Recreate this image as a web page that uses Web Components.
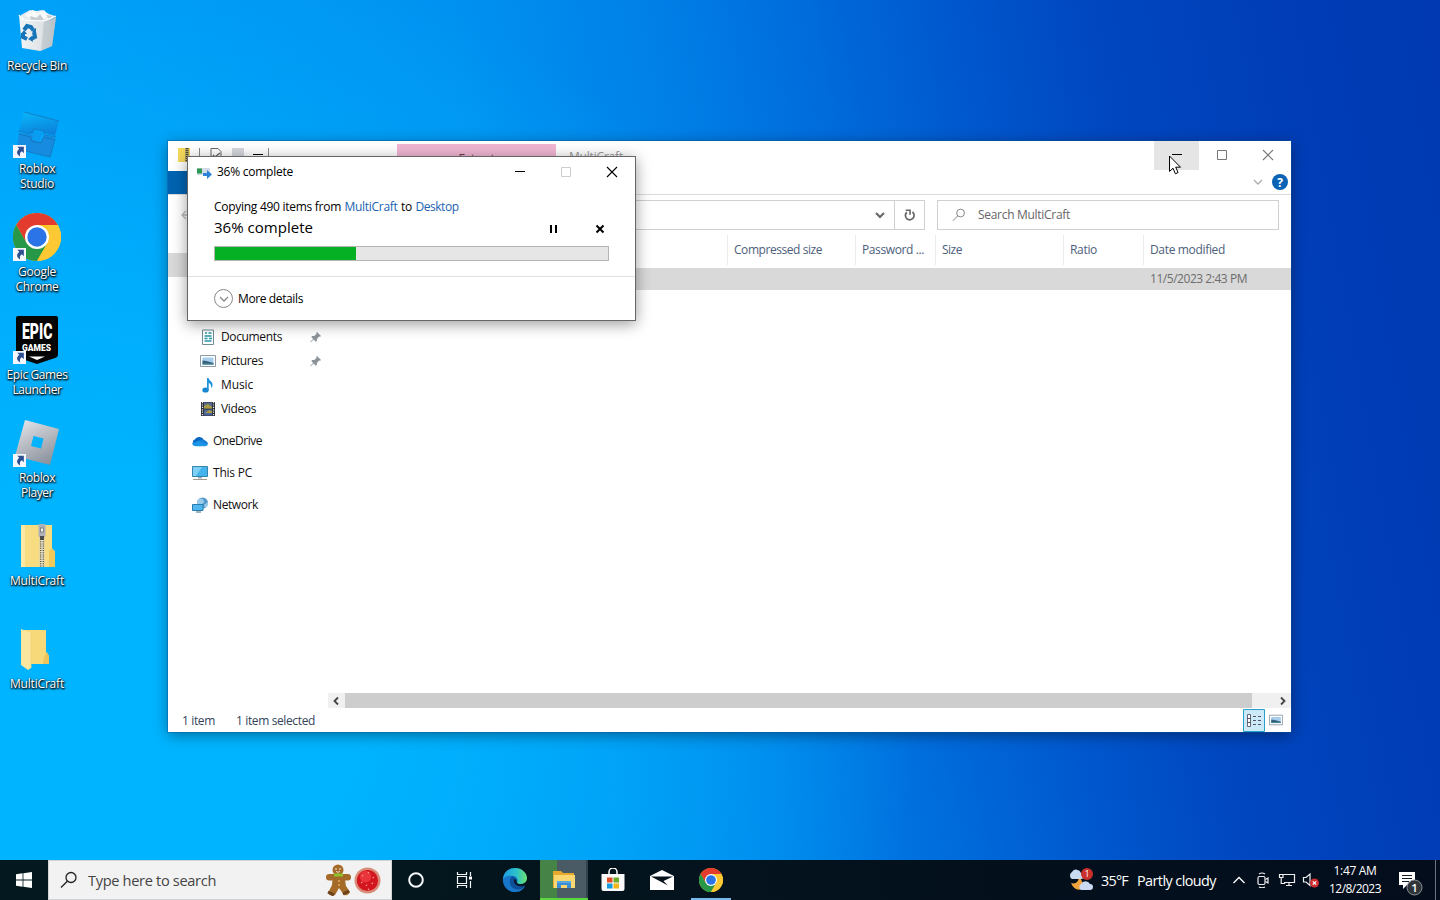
<!DOCTYPE html>
<html lang="en">
<head>
<meta charset="utf-8">
<title>Desktop</title>
<style>
    html, body {
        margin: 0;
        height: 100%;
        overflow: hidden;
    }
    body {
        font-family: "Open Sans", "Noto Sans", sans-serif;
        font-size: 12px;
        color: #111;
    }
</style>
</head>
<body>
<desktop-screen></desktop-screen>

<script>
const ICONS = {
    bin: `<svg viewBox="0 0 48 48">
        <defs><linearGradient id="g" x2="1"><stop stop-color="#f3f5f6"/><stop offset=".62" stop-color="#dfe3e5"/><stop offset="1" stop-color="#aeb8bf"/></linearGradient></defs>
        <path d="M8 8 17 3l7 1 5-1 7 4 6 2-6 5H9z" fill="#e9ecee"/>
        <path d="M12 8l8-5 6 5-6 5zM25 6l6-3 5 6-7 4z" fill="#fafafa"/><path d="M17 9l7 2 3-4 4 6-13 1zM33 8l6 1-2 4z" fill="#c6ccd0"/>
        <path d="M6 8l3 33 18 3 12-5 4-29-6 4-26-1z" fill="url(#g)"/>
        <path d="M31 14l12-4-4 29-11 5z" fill="#bcc6cc" opacity=".7"/>
        <path d="M6 8l5 5 20 1 12-5" fill="none" stroke="#fff" stroke-width="1.200"/>
        <g transform="translate(-2)"><g fill="none" stroke="#1874b8" stroke-width="4"><path d="M13 23l3-4 4 1 2 3"/><path d="M23 25l1 5-4 2"/><path d="M16 32l-4-2 0-4"/></g>
        <path d="M20 24l5-3v5zM21 29l-4 3 5 3zM10 27l3-4 3 4z" fill="#1874b8"/></g></svg>`,
    studio: `<svg viewBox="1 0 48 48">
        <defs><linearGradient id="g" x2=".3" y2="1"><stop stop-color="#08b8fb"/><stop offset="1" stop-color="#0b83dc"/></linearGradient></defs>
        <path d="M12 2l35 9-4 15-11-3-1-2-8-2-2 5-14-3z" fill="url(#g)"/>
        <path d="M7 23l12 2 3 1-1 4 8 2 3-7 11 3-5 19-33-8z" fill="#168be0"/>
        <path d="M12 2l35 9M6 21l12 3 4-5 9 2 2 4 11 2M7 24l12 3v4l10 2 3-6 11 3M5 39l33 8 5-18" fill="none" stroke="#1673b9" stroke-width=".8"/>
        <path d="M22 21l8 2-2 8-8-2z" fill="#0a9cf0"/></svg>`,
    chrome: `<svg viewBox="0 0 48 48">
        <circle cx="24" cy="24" r="24" fill="#fcc419"/>
        <path d="M24 24V12h20.8A24 24 0 0 0 3.200 12l10.400 18z" fill="#e33b2e"/>
        <path d="M3.200 12A24 24 0 0 0 24 48l10.400-18L24 24 13.600 30z" fill="#279847"/>
        <path d="M44.800 12A24 24 0 0 1 24 48l10.400-18A12 12 0 0 0 34 17V12z" fill="#fcc934"/>
        <circle cx="24" cy="24" r="12" fill="#fff"/><circle cx="24" cy="24" r="9.700" fill="#2b74e8"/></svg>`,
    epic: `<svg viewBox="1 0 48 48">
        <path d="M6 0h38q2 0 2 2v36q0 3-3 4L25 48 7 42q-3-1-3-4V2q0-2 2-2z" fill="#050505"/>
        <text transform="translate(10 22.500) scale(.64 1)" font-family="Roboto, sans-serif" font-size="22" font-weight="900" fill="#fff">EPIC</text>
        <text x="10" y="35" textLength="29" lengthAdjust="spacingAndGlyphs" font-family="Roboto, sans-serif" font-size="8.500" font-weight="900" fill="#fff">GAMES</text>
        <path d="M17 40.500h16L25 44z" fill="#fff"/></svg>`,
    player: `<svg viewBox="1 0 48 48">
        <defs><linearGradient id="g" x1=".2" x2=".7" y2="1"><stop stop-color="#e1e3e7"/><stop offset=".5" stop-color="#b5b9c0"/><stop offset="1" stop-color="#8a919c"/></linearGradient></defs>
        <path fill-rule="evenodd" d="M13 1l34 9-9 36-35-9zM21.500 17l-2.500 10 10 2.500 2.500-10z" fill="url(#g)"/></svg>`,
    zipBig: `<svg viewBox="0 0 48 48">
        <path d="M8 3h31v24l3 2v16H8z" fill="#f7dc82"/><path d="M8 3h4v42H8z" fill="#fbe8a5"/><path d="M36 29l3-3 3 4v15h-6z" fill="#efc95b"/>
        <path d="M26 2h6v43h-6z" fill="#e5d7a3"/>
        <path d="M29 17v28" stroke="#5c5746" stroke-width="4" stroke-dasharray="1 1.200"/><path d="M29 17v28" stroke="#eee" stroke-width="1"/>
        <rect x="25.500" y="2" width="7" height="13" rx="1" fill="#aeb2b8"/><rect x="27.500" y="6" width="3" height="4" fill="#eee" stroke="#666" stroke-width=".7"/><path d="M27 14h4v4h-4z" fill="#4b4b4b"/></svg>`,
    folderBig: `<svg viewBox="0 0 48 48">
        <path d="M9 5h24v22l3 4v8H9z" fill="#f8d979"/><path d="M8 4l10 4v35l-3 2-7-5z" fill="#fbe6a0"/><path d="M31 32l3-5 2 4v8h-6z" fill="#edc45c"/><path d="M18 8v35" stroke="#eed07a" stroke-width=".8"/></svg>`,
    shortcut: `<svg viewBox="0 0 12 12"><path d="M0 0h12v12H0z" fill="#f4f7fb"/><path d="M4 1.500h6v6L8.200 5.700C6 7 6.300 8.500 6.600 10.500 3 8.500 3 6 5.800 3.500z" fill="#2c4e92"/></svg>`,
    zip: `<svg viewBox="0 0 16 16"><path d="M2 1h12v14H2z" fill="#f4d85b"/><path d="M9 1h4v14H9z" fill="#b7a865"/><path d="M11 1v14" stroke="#4d4630" stroke-width="2.500" stroke-dasharray="1 1"/></svg>`,
    page: `<svg viewBox="0 0 16 16"><path d="M3 1.500h7l3 3V15H3z" fill="#fff" stroke="#666"/><path d="M5 8l2 2 5-4" fill="none" stroke="#666" stroke-width="1.400"/></svg>`,
    copy: `<svg viewBox="0 0 16 16"><path d="M1 4h13v7H1z" fill="#d3dce6"/><path d="M1 4.500h5v5H1z" fill="#2c9a55"/><path d="M7 9h4V6l5 4.500L11 15v-3H7z" fill="#2d83d8"/></svg>`,
    minus: `<svg viewBox="0 0 12 12"><path d="M1 5.500h10" stroke="currentColor"/></svg>`,
    square: `<svg viewBox="0 0 12 12"><path d="M1.500 1.500h9v9h-9z" fill="none" stroke="currentColor"/></svg>`,
    cross: `<svg viewBox="0 0 12 12"><path d="M1 1l10 10M11 1 1 11" stroke="currentColor" stroke-width="1.100"/></svg>`,
    crossBold: `<svg viewBox="0 0 12 12"><path d="M2.500 2.500l7 7M9.500 2.500l-7 7" stroke="currentColor" stroke-width="2"/></svg>`,
    pause: `<svg viewBox="0 0 12 12"><path d="M3 2v8M8 2v8" stroke="currentColor" stroke-width="2"/></svg>`,
    down: `<svg viewBox="0 0 12 12"><path d="M2 4l4 4 4-4" fill="none" stroke="currentColor" stroke-width="var(--stroke, 1.300)"/></svg>`,
    left: `<svg viewBox="0 0 12 12"><path d="M8 2.500 4.500 6 8 9.500" fill="none" stroke="#444" stroke-width="1.800"/></svg>`,
    right: `<svg viewBox="0 0 12 12"><path d="M4 2.500 7.500 6 4 9.500" fill="none" stroke="#444" stroke-width="1.800"/></svg>`,
    up: `<svg viewBox="0 0 14 14"><path d="M1.500 10 7 4.500l5.500 5.500" fill="none" stroke="#fff" stroke-width="1.300"/></svg>`,
    back: `<svg viewBox="0 0 12 12"><path d="M11 6H2M6 2 2 6l4 4" fill="none" stroke="#bbb" stroke-width="1.300"/></svg>`,
    refresh: `<svg viewBox="0 0 12 12"><path d="M8.700 2.800a4 4 0 1 1-5.200.2" fill="none" stroke="#666" stroke-width="1.600"/><path d="M2.500 1.200h4v4" fill="none" stroke="#666" stroke-width="1.500"/></svg>`,
    search: `<svg viewBox="0 0 18 18"><circle cx="11" cy="6.500" r="5" fill="none" stroke="currentColor" stroke-width="var(--stroke, 1.300)"/><path d="M7.300 10.200 1 16.500" stroke="currentColor" stroke-width="var(--stroke, 1.300)"/></svg>`,
    help: `<svg viewBox="0 0 16 16"><circle cx="8" cy="8" r="8" fill="#0a63b5"/><text x="8" y="12.500" text-anchor="middle" font-family="Open Sans, sans-serif" font-weight="700" font-size="12" fill="#fff">?</text></svg>`,
    document: `<svg viewBox="0 0 16 16"><path d="M2.500 1h11v14.500h-11z" fill="#fff" stroke="#6f8a94"/><path d="M5 4h2M8.500 4h3M4.500 7h7M4.500 9.500h3M9 9.500h3M4.500 12h7" stroke="#2596a6" stroke-width="1.300"/></svg>`,
    picture: `<svg viewBox="0 0 16 16"><path d="M.5 2.500h15v11H.5z" fill="#fff" stroke="#8b9aa5"/><path d="M2.500 4.500h11v7h-11z" fill="#a6cdeb"/><path d="M2.500 7.500l4 .5 7 2v1.500h-11z" fill="#34617b"/><path d="M2.500 10.500h11v1h-11z" fill="#4c8d9c"/></svg>`,
    music: `<svg viewBox="0 0 16 16"><ellipse cx="5.500" cy="13" rx="3.200" ry="2.600" fill="#1686cf"/><path d="M7 13V1h1.600c.4 3 4.200 3.500 4 7-.1 1.500-1 2.500-1.600 3 .6-3-.8-4.500-2.300-5v7z" fill="#1e93dc"/></svg>`,
    video: `<svg viewBox="0 0 16 16"><path d="M1 1h14v14H1z" fill="#2c3038"/><path d="M4 1.500h8v6H4z" fill="#576a8d"/><path d="M4 8.500h8v6H4z" fill="#4c659a"/><path d="M4 5l4-2 4 3v1.500H4zM5 12l4-3 3 1v2z" fill="#a89b42"/><path d="M2.500 1v14M13.500 1v14" stroke="#e5e5e5" stroke-width="1.200" stroke-dasharray="1.200 1.200"/></svg>`,
    onedrive: `<svg viewBox="0 0 16 16"><path d="M3.500 13A3.500 3.500 0 0 1 3 6.300a5 5 0 0 1 9 1A3 3 0 0 1 13 13z" fill="#0a67c2"/><path d="M0 10.500 7 7.500l9 4q-1 1.800-3 1.800H4q-3 0-4-2.800z" fill="#1b95e8"/><path d="M7 7.500q3-2 6 0 3 1 3 4z" fill="#1580d5"/></svg>`,
    pc: `<svg viewBox="0 0 16 16"><path d="M.5 1.500h15v10H.5z" fill="#45b3ec" stroke="#3584ad"/><path d="M1 2h9l-6 9H1z" fill="#80d0f5"/><path d="M6 12h4v1.500H6z" fill="#9ab"/><path d="M1 14.500h14" stroke="#a39b8d"/></svg>`,
    network: `<svg viewBox="0 0 16 16"><circle cx="10.500" cy="6" r="5.500" fill="#5599c6"/><path d="M8 1.500q4 0 4 4l-4 3-3-2q0-4 3-5zM12 8l4-3v3l-3 3z" fill="#9acced"/><path d="M.5 7.500h10.500v6H.5z" fill="#4fb7ee" stroke="#287db0"/><path d="M4 15h5" stroke="#829cab" stroke-width="1.500"/></svg>`,
    pin: `<svg viewBox="0 0 12 12"><path d="M7 1l4 4-1 .8-.8-.2L7 7.900 6.800 10l-.9.700L3.600 8.400.8 11.200l-.5-.5L3.100 8 1.300 6.100l.8-1 2.200-.2L6.500 2.800l-.2-1z" fill="#8d9499"/></svg>`,
    details: `<svg viewBox="0 0 22 23"><path d="M.5.500h21v22H.5z" fill="#cce9f7" stroke="#29a0c9"/><path d="M4.500 5.500h3v12h-3z" fill="#fff" stroke="#667"/><path d="M4 9.500h4M4 13.500h4M10 7.500h3M15 7.500h3M10 11.500h3M15 11.500h3M10 15.500h3M15 15.500h3" stroke="#556"/></svg>`,
    logo: `<svg viewBox="0 0 16 16"><path d="M0 2.200 6.600 1.300v6.300H0zM7.400 1.200 16 0v7.600H7.400zM0 8.400h6.600v6.300L0 13.800zM7.400 8.400H16V16l-8.600-1.200z" fill="#fff"/></svg>`,
    ginger: `<svg viewBox="0 0 26 32"><g fill="#a66a28"><circle cx="13" cy="6" r="5.500"/><rect x="1" y="10" width="25" height="6.500" rx="3.200"/><path d="M8 10h11l2 12 4 6q-2 4-6 3l-5-7-4 7q-5 2-7-2l4-8z"/></g><path d="M3 28l6 3M18 30l6-3" stroke="#6c421d" stroke-width="3"/><path d="M9 11h9" stroke="#8bc32b" stroke-width="3"/><circle cx="11" cy="5" r=".8" fill="#fff"/><circle cx="15" cy="5" r=".8" fill="#fff"/><path d="M11 7.500q2 1.500 4 0" stroke="#fff" stroke-width=".8" fill="none"/><circle cx="14" cy="17" r="1" fill="#e1ae5a"/><circle cx="14" cy="21" r="1" fill="#e1ae5a"/></svg>`,
    cookie: `<svg viewBox="0 0 28 28"><circle cx="14" cy="14" r="13.500" fill="#d98c78"/><circle cx="14" cy="14" r="11" fill="#d2151f"/><circle cx="12" cy="10" r="6" fill="#e8343a"/><g fill="#ff9f98"><circle cx="9" cy="9" r=".8"/><circle cx="15" cy="6" r=".8"/><circle cx="20" cy="11" r=".8"/><circle cx="8" cy="16" r=".8"/><circle cx="13" cy="19" r=".8"/><circle cx="19" cy="17" r=".8"/><circle cx="15" cy="23" r=".8"/></g></svg>`,
    cortana: `<svg viewBox="0 0 18 18"><circle cx="9" cy="9" r="6.800" fill="none" stroke="#f3f7f8" stroke-width="2"/></svg>`,
    taskview: `<svg viewBox="0 0 18 18"><path d="M2.500 1v2.500h9V1M2.500 17v-2.500h9V17M2.500 5.500h9v7h-9zM15.500 1v4M15.500 10v7" fill="none" stroke="#f3f7f8" stroke-width="1.200"/><path d="M14 5.500h3v3h-3z" fill="#fff"/></svg>`,
    edge: `<svg viewBox="0 0 24 24">
        <defs><linearGradient id="a" x2="1"><stop stop-color="#1d9de2"/><stop offset=".55" stop-color="#2cc1cc"/><stop offset="1" stop-color="#6be26c"/></linearGradient></defs>
        <circle cx="12" cy="12" r="12" fill="#0d69b8"/>
        <path d="M14 23.800 24 19V10l-8 6z" fill="#04131d"/>
        <path d="M0 12C0 4 6 0 12 0c7 0 12 5 12 10 0 4-3 6-7 6-2 0-3.500-.8-3-1.600 2-3-1-6.400-5-6.400-5 0-8 2-9 4z" fill="url(#a)"/>
        <path d="M0 12c1-3 5-5 9-4-3 3-3 9 1 12 4 2.500 9 1 12.500-2.500C20 22 16 24 12 24 5 24 0 18 0 12z" fill="#1877c9"/>
        <path d="M9 8c-3 3-3 9 1 12 4 2.500 9 1 12.500-2.500-4 1.500-9 .5-10.500-3C11 12 13 10 9 8z" fill="#0d4f99"/>
        <path d="M11.500 10.500c-1.500 3 0 6.500 4 7.500 3 .5 5-.3 6.500-1.500-3 .5-6 0-7.800-1.500-1.200-1.200.5-2.500-2.700-4.500z" fill="#071a2c"/></svg>`,
    explorer: `<svg viewBox="0 0 22 20"><path d="M0 1h8l2 2h11v15H0z" fill="#e8a92c"/><path d="M1 5h21v13H1z" fill="#fbd671"/><path d="M4 18v-7h14v7h-4v-3H8v3z" fill="#3b8fd2"/><path d="M4 11h14v2H4z" fill="#57a7e1"/></svg>`,
    store: `<svg viewBox="0 0 24 24"><path d="M8 6V4a4 4 0 0 1 8 0v2" fill="none" stroke="#fff" stroke-width="1.500"/><path d="M.5 6h23v15q0 2-2 2h-19q-2 0-2-2z" fill="#fafafa"/><path d="M6 9.500h5.500v5H6z" fill="#e64b28"/><path d="M12.500 9.500H18v5h-5.500z" fill="#6aac28"/><path d="M6 15.500h5.500v5H6z" fill="#139bdc"/><path d="M12.500 15.500H18v5h-5.500z" fill="#f3b515"/></svg>`,
    mail: `<svg viewBox="0 0 24 20"><path d="M0 6 12 0l12 6v14H0z" fill="#fff"/><path d="M1 6.500h22L13.500 11l4.500 4.500z" fill="#07121a"/></svg>`,
    weather: `<svg viewBox="0 0 26 24"><path d="M3 15q7 2 8-6 5 4 3 12-7 3-11-6z" fill="#f1a23a"/><path d="M4 11a4 4 0 0 1 0-7 5 5 0 0 1 9 1 3 3 0 0 1 0 6z" fill="#c9daf3"/><path d="M13 22a3.500 3.500 0 0 1 0-6 5 5 0 0 1 9 0 3 3 0 0 1 0 6z" fill="#cbdaf3"/><circle cx="19" cy="6" r="6" fill="#c9302c"/><text x="19" y="9.300" text-anchor="middle" font-family="Open Sans, sans-serif" font-size="9" fill="#fff">1</text></svg>`,
    meet: `<svg viewBox="0 0 14 16"><rect x="2" y="4.500" width="7" height="8" rx="1.500" fill="none" stroke="#eee" stroke-width="1.200"/><path d="M9.500 7.500 12 6v5l-2.500-1.500M3 2Q6 0 9 2M3 15q3 1.500 6 0" fill="none" stroke="#eee" stroke-width="1.200"/></svg>`,
    lan: `<svg viewBox="0 0 18 16"><path d="M5 2.500h11.500v8H6M8 13.500h6M11 10.500v3" fill="none" stroke="#eee" stroke-width="1.200"/><path d="M1.500 2.500H5v3H1.500zM3.200 5.500v6h4" fill="none" stroke="#eee" stroke-width="1.200"/></svg>`,
    volume: `<svg viewBox="0 0 18 16"><path d="M1.500 5.500H4L8 2v11.500L4 10H1.500z" fill="none" stroke="#eee" stroke-width="1.200"/><circle cx="12.500" cy="11" r="4.500" fill="#cf2c30"/><path d="M10.800 9.300l3.400 3.400M14.200 9.300l-3.400 3.400" stroke="#fff" stroke-width="1.200"/></svg>`,
    notes: `<svg viewBox="0 0 26 26"><path d="M1 2h16v13H9l-4 4v-4H1z" fill="#fff"/><path d="M4 5.500h10M4 8.500h10M4 11.500h7" stroke="#111b23"/><circle cx="16.500" cy="17.500" r="7.500" fill="#30353a" stroke="#8d9194"/><text x="16.500" y="21.500" text-anchor="middle" font-family="Open Sans, sans-serif" font-size="11.500" font-weight="600" fill="#fff">1</text></svg>`,
    cursor: `<svg viewBox="0 0 14 20"><path d="M1.500 1v15.500l3.500-3.300 2.400 5.600 2.700-1.200-2.400-5.400h4.800z" fill="#fff" stroke="#000"/></svg>`
}

class WinIcon extends HTMLElement {

    constructor() {
        super()
        this.shadow = this.attachShadow({ mode: 'open' })
    }

    connectedCallback() {
        const w = this.getAttribute('w') || 16
        const h = this.getAttribute('h') || w
        this.shadow.innerHTML =
      /*html*/`
        <style>
            :host{
                display:block;
                flex:none;
                width:${w}px;
                height:${h}px;
            }
            svg{
                display:block;
                width:100%;
                height:100%;
            }
        </style>
        ${ICONS[this.getAttribute('name')]}
      `
    }
}

// one line of text, tracked so that it fills the width in "w"
class FitText extends HTMLElement {

    constructor() {
        super()
        this.shadow = this.attachShadow({ mode: 'open' })
    }

    connectedCallback() {
        const w = Number(this.getAttribute('w'))
        this.shadow.innerHTML =
      /*html*/`
        <style>
            :host{
                display:inline-block;
                flex:none;
                width:${w}px;
                white-space:nowrap;
            }
        </style>
        <span><slot></slot></span>
      `
        const span = this.shadow.querySelector('span')
        const natural = span.getBoundingClientRect().width
        const gap = (w - natural) / this.textContent.length
        span.style.letterSpacing = gap.toFixed(3) + 'px'
    }
}

class DesktopIcon extends HTMLElement {

    constructor() {
        super()
        this.shadow = this.attachShadow({ mode: 'open' })
    }

    connectedCallback() {
        this.shadow.innerHTML =
      /*html*/`
        <style>
            :host{
                display:flex;
                flex-direction:column;
                align-items:center;
                box-sizing:border-box;
                width:74px;
                height:103px;
                padding-top:7px;
                color:#fff;
                line-height:15px;
                text-align:left;
                text-shadow:0 1px 2px #000, 1px 1px 2px #000, 0 0 2px #0006;
            }
            .picture{
                position:relative;
                margin-bottom:3px;
            }
            .arrow{
                position:absolute;
                left:0;
                bottom:0;
            }
        </style>
        <div class="picture">
            <win-icon name="${this.getAttribute('icon')}" w="48"></win-icon>
            ${this.hasAttribute('shortcut') ? '<win-icon class="arrow" name="shortcut" w="13"></win-icon>' : ''}
        </div>
        <slot></slot>
      `
    }
}

class NavItem extends HTMLElement {

    constructor() {
        super()
        this.shadow = this.attachShadow({ mode: 'open' })
    }

    connectedCallback() {
        this.shadow.innerHTML =
      /*html*/`
        <style>
            :host{
                display:flex;
                align-items:center;
                gap:5px;
                height:24px;
                padding:0 6px 0 24px;
            }
            :host([child]){
                padding-left:32px;
            }
            win-icon{
                margin-top:1px;
            }
            .pin{
                margin-left:auto;
            }
        </style>
        <win-icon name="${this.getAttribute('icon')}"></win-icon>
        <slot></slot>
        ${this.hasAttribute('pinned') ? '<win-icon class="pin" name="pin" w="12"></win-icon>' : ''}
      `
    }
}

class ExplorerWindow extends HTMLElement {

    constructor() {
        super()
        this.shadow = this.attachShadow({ mode: 'open' })
        this.render()
    }

    render() {
        this.shadow.innerHTML =
      /*html*/`
        <style>
            :host{
                display:flex;
                flex-direction:column;
                width:1123px;
                height:591px;
                background:#fff;
                box-shadow:0 0 0 1px #0a559b66, 0 3px 14px #0006;
            }
            .title{
                display:flex;
                height:30px;
                color:#999;
            }
            .tools{
                display:flex;
                align-items:center;
                gap:8px;
                width:221px;
                height:28px;
                padding-left:8px;
            }
            .tools i{
                width:1px;
                height:14px;
                margin-left:-1px;
                background:#888;
            }
            .tools i:last-child{
                margin-left:-4px;
            }
            .tools b{
                width:12px;
                height:15px;
                background:#d4d7dc;
            }
            .tools win-icon[name=minus]{
                color:#000;
            }
            .extract{
                width:159px;
                margin-top:3px;
                background:#f1b6d2;
                color:#5b3a4b;
                text-align:center;
                line-height:29px;
                overflow:hidden;
            }
            .name{
                padding-left:13px;
                line-height:31px;
            }
            .buttons{
                display:flex;
                margin-left:auto;
                color:#777;
            }
            .buttons div{
                display:flex;
                align-items:center;
                justify-content:center;
                box-sizing:border-box;
                width:46px;
                height:29px;
                padding-bottom:1px;
            }
            .buttons .hover{
                width:45px;
                background:#e5e5e5;
                color:#000;
            }
            .tabs{
                display:flex;
                height:23px;
                border-bottom:1px solid #dadbdc;
                padding-right:3px;
                color:#aaa;
            }
            .file{
                width:56px;
                margin-right:auto;
                background:#0063b1;
            }
            .tabs win-icon{
                margin:5px 8px 0 0;
            }
            .tabs win-icon:last-child{
                margin:3px 0 0;
            }
            .address{
                display:flex;
                align-items:center;
                height:40px;
                padding:0 12px;
                color:#666;
            }
            .path, .find{
                display:flex;
                align-items:center;
                box-sizing:border-box;
                height:30px;
                border:1px solid #d0d0d0;
            }
            .path{
                width:669px;
                margin:0 12px 0 auto;
                justify-content:flex-end;
            }
            .path > win-icon{
                margin-right:8px;
                --stroke:2;
            }
            .refresh{
                display:flex;
                align-items:center;
                justify-content:center;
                width:29px;
                height:28px;
                border-left:1px solid #d0d0d0;
            }
            .find{
                width:342px;
                gap:12px;
                padding:0 0 1px 14px;
                --stroke:1;
            }
            .main{
                display:flex;
                flex:1;
            }
            nav{
                width:160px;
                padding-top:18px;
            }
            .current{
                height:24px;
                margin-bottom:47px;
                background:#d9d9d9;
            }
            .group{
                margin-bottom:8px;
            }
            .list{
                display:flex;
                flex-direction:column;
                flex:1;
            }
            .head, .row{
                display:grid;
                grid-template-columns:399px 128px 80px 128px 80px 148px;
                color:#4c607a;
            }
            .head{
                height:30px;
                margin-bottom:3px;
            }
            .head div{
                height:30px;
                line-height:30px;
                border-left:1px solid #ececec;
                padding-left:6px;
            }
            .head div:first-child{
                border:0;
            }
            .row{
                height:22px;
                line-height:21px;
                background:#d9d9d9;
                color:#6d6d6d;
            }
            .row fit-text{
                grid-column:6;
                margin-left:7px;
            }
            .scroll{
                display:flex;
                align-items:center;
                justify-content:space-between;
                height:15px;
                margin:auto 0 1px;
                background:#f0f0f0;
                padding:0 2px;
            }
            .thumb{
                align-self:stretch;
                flex:1;
                margin:0 25px 0 3px;
                background:#cdcdcd;
            }
            .status{
                display:flex;
                align-items:center;
                height:23px;
                padding:0 8px 0 14px;
                color:#33445c;
            }
            .status .sel{
                margin:0 auto 0 21px;
            }
            .status win-icon:last-child{
                margin:0 0 2px 4px;
            }
        </style>
        <div class="title">
            <div class="tools">
                <win-icon name="zip"></win-icon><i></i>
                <win-icon name="page"></win-icon><b></b>
                <win-icon name="minus" w="12"></win-icon><i></i>
            </div>
            <div class="extract"><fit-text w="36">Extract</fit-text></div>
            <div class="name"><fit-text w="54">MultiCraft</fit-text></div>
            <div class="buttons">
                <div class="hover"><win-icon name="minus" w="12"></win-icon></div>
                <div><win-icon name="square" w="12"></win-icon></div>
                <div><win-icon name="cross" w="12"></win-icon></div>
            </div>
        </div>
        <div class="tabs">
            <div class="file"></div>
            <win-icon name="down" w="12"></win-icon>
            <win-icon name="help"></win-icon>
        </div>
        <div class="address">
            <win-icon name="back" w="12"></win-icon>
            <div class="path">
                <win-icon name="down" w="12"></win-icon>
                <div class="refresh"><win-icon name="refresh" w="13"></win-icon></div>
            </div>
            <div class="find">
                <win-icon name="search" w="14"></win-icon>
                <fit-text w="92">Search MultiCraft</fit-text>
            </div>
        </div>
        <div class="main">
            <nav>
                <div class="current"></div>
                <div class="group">
                    <nav-item child pinned icon="document"><fit-text w="61">Documents</fit-text></nav-item>
                    <nav-item child pinned icon="picture"><fit-text w="42">Pictures</fit-text></nav-item>
                    <nav-item child icon="music"><fit-text w="32">Music</fit-text></nav-item>
                    <nav-item child icon="video"><fit-text w="35">Videos</fit-text></nav-item>
                </div>
                <nav-item class="group" icon="onedrive"><fit-text w="49">OneDrive</fit-text></nav-item>
                <nav-item class="group" icon="pc"><fit-text w="39">This PC</fit-text></nav-item>
                <nav-item icon="network"><fit-text w="45">Network</fit-text></nav-item>
            </nav>
            <div class="list">
                <div class="head">
                    <div></div>
                    <div><fit-text w="88">Compressed size</fit-text></div>
                    <div><fit-text w="62">Password ...</fit-text></div>
                    <div><fit-text w="20">Size</fit-text></div>
                    <div><fit-text w="27">Ratio</fit-text></div>
                    <div><fit-text w="75">Date modified</fit-text></div>
                </div>
                <div class="row"><fit-text w="97">11/5/2023 2:43 PM</fit-text></div>
                <div class="scroll">
                    <win-icon name="left" w="12"></win-icon>
                    <div class="thumb"></div>
                    <win-icon name="right" w="12"></win-icon>
                </div>
            </div>
        </div>
        <div class="status">
            <fit-text w="33">1 item</fit-text>
            <fit-text class="sel" w="79">1 item selected</fit-text>
            <win-icon name="details" w="22" h="23"></win-icon>
            <win-icon name="picture" w="14"></win-icon>
        </div>
      `
    }
}

class CopyDialog extends HTMLElement {

    constructor() {
        super()
        this.shadow = this.attachShadow({ mode: 'open' })
        this.render()
    }

    render() {
        this.shadow.innerHTML =
      /*html*/`
        <style>
            :host{
                display:flex;
                flex-direction:column;
                box-sizing:border-box;
                width:449px;
                height:165px;
                border:1px solid #666;
                background:#fff;
                box-shadow:0 3px 14px #0006;
                color:#000;
            }
            .title{
                display:flex;
                align-items:center;
                height:29px;
                padding:0 17px 0 8px;
            }
            .title fit-text{
                margin:0 auto 0 5px;
            }
            .title win-icon + win-icon{
                margin-left:34px;
            }
            .title .off{
                color:#ccc;
            }
            .body{
                flex:1;
                padding:12px 26px 0;
            }
            .from{
                display:flex;
                gap:3.500px;
                height:18px;
                line-height:18px;
            }
            a{
                color:#1c62b0;
            }
            .state{
                display:flex;
                align-items:center;
                height:24px;
                font-size:15px;
            }
            .state fit-text{
                margin:0 auto 2px 0;
            }
            .state win-icon{
                margin-top:1px;
            }
            .state win-icon + win-icon{
                margin:1px 3px 0 34px;
            }
            .bar{
                box-sizing:border-box;
                height:15px;
                margin-top:6px;
                border:1px solid #b5b5b5;
                background:#e6e6e6;
            }
            .done{
                width:141px;
                height:13px;
                background:#06b025;
            }
            .more{
                display:flex;
                align-items:center;
                gap:5px;
                height:43px;
                padding-left:26px;
                border-top:1px solid #e1e1e1;
            }
            .round{
                display:flex;
                align-items:center;
                justify-content:center;
                box-sizing:border-box;
                width:19px;
                height:19px;
                border:1px solid #888;
                border-radius:50%;
                color:#888;
            }
        </style>
        <div class="title">
            <win-icon name="copy"></win-icon>
            <fit-text w="76">36% complete</fit-text>
            <win-icon name="minus" w="12"></win-icon>
            <win-icon class="off" name="square" w="12"></win-icon>
            <win-icon name="cross" w="12"></win-icon>
        </div>
        <div class="body">
            <div class="from">
                <fit-text w="127">Copying 490 items from</fit-text>
                <a><fit-text w="53">MultiCraft</fit-text></a>
                <fit-text w="11">to</fit-text>
                <a><fit-text w="43">Desktop</fit-text></a>
            </div>
            <div class="state">
                <fit-text w="99">36% complete</fit-text>
                <win-icon name="pause" w="12"></win-icon>
                <win-icon name="crossBold" w="12"></win-icon>
            </div>
            <div class="bar"><div class="done"></div></div>
        </div>
        <div class="more">
            <div class="round"><win-icon name="down" w="12"></win-icon></div>
            <fit-text w="65">More details</fit-text>
        </div>
      `
    }
}

class TaskBar extends HTMLElement {

    constructor() {
        super()
        this.shadow = this.attachShadow({ mode: 'open' })
        this.render()
    }

    render() {
        this.shadow.innerHTML =
      /*html*/`
        <style>
            :host{
                display:flex;
                height:40px;
                background:linear-gradient(90deg, #03191f, #04131d 50%, #030d1c);
                color:#fff;
            }
            .app, .search, .tray{
                display:flex;
                align-items:center;
                justify-content:center;
            }
            .app{
                box-sizing:border-box;
                width:48px;
                border-bottom:2px solid transparent;
                padding-top:2px;
            }
            .search{
                box-sizing:border-box;
                width:344px;
                border:1px solid #d2d4d5;
                background:#f2f2f2;
                font-size:14.600px;
                padding:0 10px 0 11px;
            }
            .search win-icon{
                color:#222;
            }
            .search fit-text{
                margin:0 auto 0 10px;
                color:#444;
            }
            .search win-icon:last-child{
                margin-left:3px;
            }
            .apps{
                display:flex;
            }
            .edge{
                width:52px;
                padding-left:2px;
            }
            .edge + .app{
                border-color:#5bd63c;
                background:linear-gradient(90deg, #468346 17px, #4b5b65 17px 46px, #33434d 46px);
            }
            .store{
                width:49px;
            }
            .mail{
                width:50px;
            }
            .chrome{
                width:40px;
                margin-left:4px;
                border-color:#76b9ed;
            }
            .tray{
                margin-left:auto;
            }
            .weather{
                font-size:14.400px;
                margin-left:7px;
            }
            .weather + .weather{
                margin:0 16px 0 9px;
            }
            .up{
                margin-right:10px;
            }
            .meet{
                margin-right:8px;
            }
            .volume{
                margin:0 8px 0 6px;
            }
            .clock{
                display:flex;
                flex-direction:column;
                align-items:center;
                width:54px;
                line-height:18px;
            }
            .notes{
                margin:6px 11px 0 16px;
            }
            .edgeline{
                width:1px;
                height:40px;
                margin-right:4px;
                background:#6d7580;
            }
        </style>
        <div class="app"><win-icon name="logo"></win-icon></div>
        <div class="search">
            <win-icon name="search" w="18"></win-icon>
            <fit-text w="128">Type here to search</fit-text>
            <win-icon name="ginger" w="26" h="32"></win-icon>
            <win-icon name="cookie" w="27"></win-icon>
        </div>
        <div class="apps">
            <div class="app"><win-icon name="cortana" w="18"></win-icon></div>
            <div class="app"><win-icon name="taskview" w="18"></win-icon></div>
            <div class="app edge"><win-icon name="edge" w="24"></win-icon></div>
            <div class="app"><win-icon name="explorer" w="22" h="20"></win-icon></div>
            <div class="app store"><win-icon name="store" w="24"></win-icon></div>
            <div class="app mail"><win-icon name="mail" w="24" h="20"></win-icon></div>
            <div class="app chrome"><win-icon name="chrome" w="24"></win-icon></div>
        </div>
        <div class="tray">
            <win-icon name="weather" w="26" h="24"></win-icon>
            <fit-text class="weather" w="27">35°F</fit-text>
            <fit-text class="weather" w="79">Partly cloudy</fit-text>
            <win-icon class="up" name="up" w="14"></win-icon>
            <win-icon class="meet" name="meet" w="14" h="16"></win-icon>
            <win-icon name="lan" w="18" h="16"></win-icon>
            <win-icon class="volume" name="volume" w="18" h="16"></win-icon>
            <div class="clock">
                <fit-text w="43">1:47 AM</fit-text>
                <fit-text w="52">12/8/2023</fit-text>
            </div>
            <win-icon class="notes" name="notes" w="26"></win-icon>
            <div class="edgeline"></div>
        </div>
      `
    }
}

class DesktopScreen extends HTMLElement {

    constructor() {
        super()
        this.shadow = this.attachShadow({ mode: 'open' })
        this.render()
    }

    render() {
        this.shadow.innerHTML =
      /*html*/`
        <style>
            :host{
                display:flex;
                flex-direction:column;
                position:relative;
                width:1440px;
                height:900px;
                overflow:hidden;
                background:
                    radial-gradient(ellipse 800px 760px at 120px 700px, #00b4ff 30%, #00b4ff00),
                    linear-gradient(80deg, #009ff8 10%, #0092f0 38%, #0081e8 50%, #006cdc 60%, #0058ce 69%, #0047c0 78%, #003db6 90%, #0039b2);
            }
            .icons{
                flex:1;
            }
            explorer-window, copy-dialog, .cursor{
                position:absolute;
            }
            explorer-window{
                left:168px;
                top:141px;
            }
            copy-dialog{
                left:187px;
                top:156px;
            }
            .cursor{
                left:1168px;
                top:155px;
            }
        </style>
        <div class="icons">
            <desktop-icon icon="bin"><fit-text w="60">Recycle Bin</fit-text></desktop-icon>
            <desktop-icon icon="studio" shortcut><fit-text w="36">Roblox</fit-text><fit-text w="34">Studio</fit-text></desktop-icon>
            <desktop-icon icon="chrome" shortcut><fit-text w="38">Google</fit-text><fit-text w="43">Chrome</fit-text></desktop-icon>
            <desktop-icon icon="epic" shortcut><fit-text w="61">Epic Games</fit-text><fit-text w="49">Launcher</fit-text></desktop-icon>
            <desktop-icon icon="player" shortcut><fit-text w="36">Roblox</fit-text><fit-text w="32">Player</fit-text></desktop-icon>
            <desktop-icon icon="zipBig"><fit-text w="54">MultiCraft</fit-text></desktop-icon>
            <desktop-icon icon="folderBig"><fit-text w="54">MultiCraft</fit-text></desktop-icon>
        </div>
        <explorer-window></explorer-window>
        <copy-dialog></copy-dialog>
        <win-icon class="cursor" name="cursor" w="14" h="20"></win-icon>
        <task-bar></task-bar>
      `
    }
}

customElements.define('desktop-screen', DesktopScreen);
customElements.define('explorer-window', ExplorerWindow);
customElements.define('copy-dialog', CopyDialog);
customElements.define('task-bar', TaskBar);
customElements.define('desktop-icon', DesktopIcon);
customElements.define('nav-item', NavItem);
customElements.define('win-icon', WinIcon);
// last: it measures its text, so everything round it has to be laid out
customElements.define('fit-text', FitText);
</script>
</body>
</html>
